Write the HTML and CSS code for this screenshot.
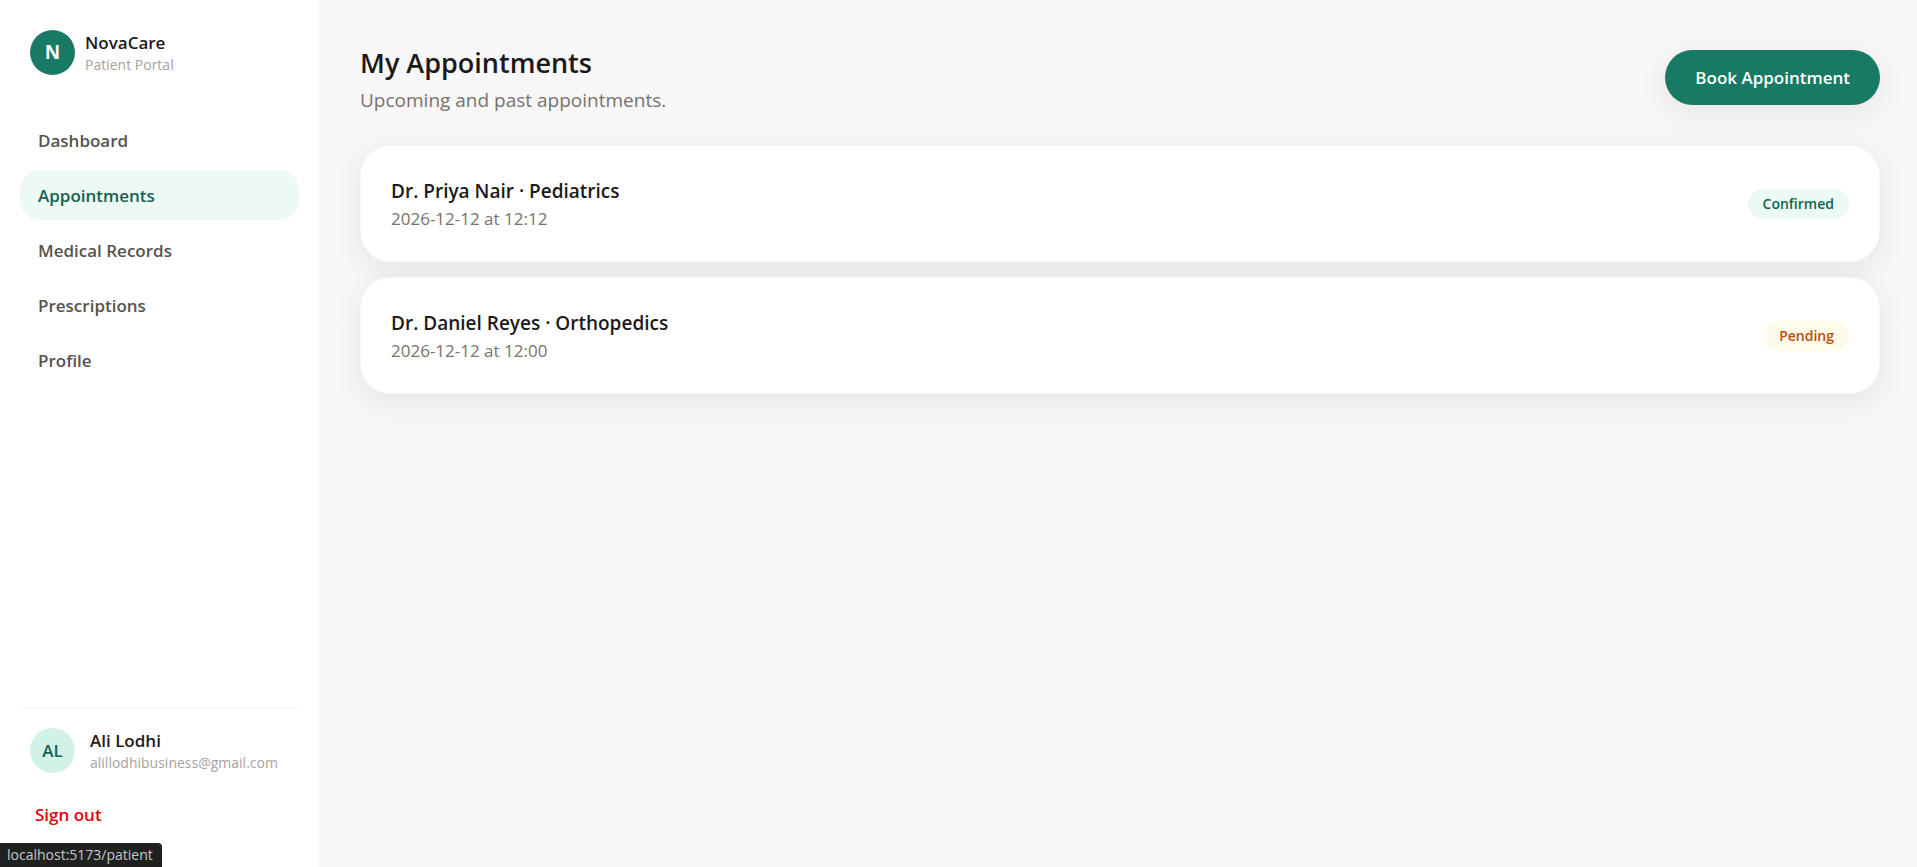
FILE: index.html
```html
<!DOCTYPE html>
<html lang="en">
<head>
  <meta charset="utf-8">
  <meta name="viewport" content="width=device-width, initial-scale=1">
  <title>NovaCare Patient Portal</title>
  <link rel="stylesheet" href="styles.css">
</head>
<body>
  <div class="app">
    <aside class="sidebar">
      <div class="brand">
        <span class="avatar brand-mark">N</span>
        <div>
          <p class="name">NovaCare</p>
          <p class="detail">Patient Portal</p>
        </div>
      </div>
      <nav class="nav" aria-label="Main">
        <a class="nav-link" href="#dashboard">Dashboard</a>
        <a class="nav-link is-active" href="#appointments" aria-current="page">Appointments</a>
        <a class="nav-link" href="#records">Medical Records</a>
        <a class="nav-link" href="#prescriptions">Prescriptions</a>
        <a class="nav-link" href="#profile">Profile</a>
      </nav>
      <div class="account">
        <div class="user">
          <span class="avatar user-mark">AL</span>
          <div>
            <p class="name">Ali Lodhi</p>
            <p class="detail">alillodhibusiness@gmail.com</p>
          </div>
        </div>
        <button class="sign-out" type="button">Sign out</button>
      </div>
    </aside>

    <main class="main">
      <header class="page-header">
        <div>
          <h1 class="page-title">My Appointments</h1>
          <p class="page-subtitle">Upcoming and past appointments.</p>
        </div>
        <button class="book" type="button">Book Appointment</button>
      </header>
      <ul class="appointments">
        <li class="card">
          <div>
            <h2 class="card-title">Dr. Priya Nair · Pediatrics</h2>
            <p class="card-time">2026-12-12 at 12:12</p>
          </div>
          <span class="badge badge-confirmed">Confirmed</span>
        </li>
        <li class="card">
          <div>
            <h2 class="card-title">Dr. Daniel Reyes · Orthopedics</h2>
            <p class="card-time">2026-12-12 at 12:00</p>
          </div>
          <span class="badge badge-pending">Pending</span>
        </li>
      </ul>
    </main>
  </div>
  <div class="link-status">localhost:5173/patient</div>
</body>
</html>
```

FILE: styles.css
```css
* {
  box-sizing: border-box;
}

body,
h1,
h2,
p,
ul {
  margin: 0;
}

body {
  background: #f7f7f7;
  color: #1c1917;
  font-family: "Open Sans", "Noto Sans", sans-serif;
  font-size: 17px;
  line-height: 25px;
}

button {
  border: 0;
  font: inherit;
  cursor: pointer;
}

.app {
  display: flex;
  min-height: 100vh;
}

.sidebar {
  display: flex;
  flex: 0 0 319px;
  flex-direction: column;
  padding: 30px 20px;
  background: #fff;
}

.brand,
.user {
  display: flex;
  align-items: center;
  padding: 0 10px;
}

.brand {
  gap: 10px;
}

.user {
  gap: 15px;
}

.avatar {
  display: flex;
  flex: none;
  align-items: center;
  justify-content: center;
  width: 45px;
  height: 45px;
  border-radius: 50%;
}

.brand-mark {
  background: #187a65;
  color: #fff;
  font-size: 19px;
  font-weight: 700;
}

.user-mark {
  background: #d1f2e6;
  color: #14614f;
  font-weight: 600;
}

.name {
  font-weight: 600;
  line-height: 25px;
}

.detail {
  color: #a8a29e;
  font-size: 14px;
  line-height: 20px;
}

.nav {
  display: flex;
  flex: 1;
  flex-direction: column;
  gap: 5px;
  padding-top: 40px;
}

.nav-link {
  padding: 13px 18px 12px;
  border-radius: 20px;
  color: #57534e;
  font-weight: 600;
  text-decoration: none;
}

.nav-link.is-active {
  background: #edf9f5;
  color: #14614f;
}

.account {
  padding-top: 20px;
  border-top: 1px solid #f5f5f4;
}

.sign-out {
  margin-top: 19px;
  padding: 10px 15px;
  background: none;
  color: #e7000b;
  font-weight: 600;
}

.main {
  flex: 1;
  min-width: 0;
  padding: 40px 37px 40px 41px;
}

.page-header {
  display: flex;
  align-items: center;
  justify-content: space-between;
  margin-bottom: 30px;
}

.page-title {
  font-size: 27px;
  font-weight: 600;
  line-height: 45px;
}

.page-subtitle {
  color: #79716b;
  font-size: 19px;
  line-height: 30px;
}

.book {
  padding: 15px 30px;
  border-radius: 28px;
  background: #187a65;
  box-shadow: 0 8px 30px rgba(28, 25, 23, 0.08);
  color: #fff;
  font-weight: 600;
}

.appointments {
  display: grid;
  gap: 15px;
  padding: 0;
  list-style: none;
}

.card {
  display: flex;
  align-items: center;
  justify-content: space-between;
  padding: 30px;
  border: 1px solid #f5f5f4;
  border-radius: 30px;
  background: #fff;
  box-shadow: 0 8px 30px rgba(28, 25, 23, 0.08);
}

.card-title {
  font-size: 19px;
  font-weight: 600;
  line-height: 30px;
}

.card-time {
  color: #79716b;
}

.badge {
  padding: 5px 15px;
  border-radius: 15px;
  font-size: 14px;
  font-weight: 600;
  line-height: 20px;
}

.badge-confirmed {
  background: #edf9f5;
  color: #14614f;
}

.badge-pending {
  background: #fffbeb;
  color: #bb4d00;
}

.link-status {
  position: fixed;
  bottom: 0;
  left: 0;
  padding: 2px 9px 2px 7px;
  border-radius: 0 4px 0 0;
  background: #1f2120;
  color: #c7c7c7;
  font-size: 14px;
  line-height: 20px;
}
```
